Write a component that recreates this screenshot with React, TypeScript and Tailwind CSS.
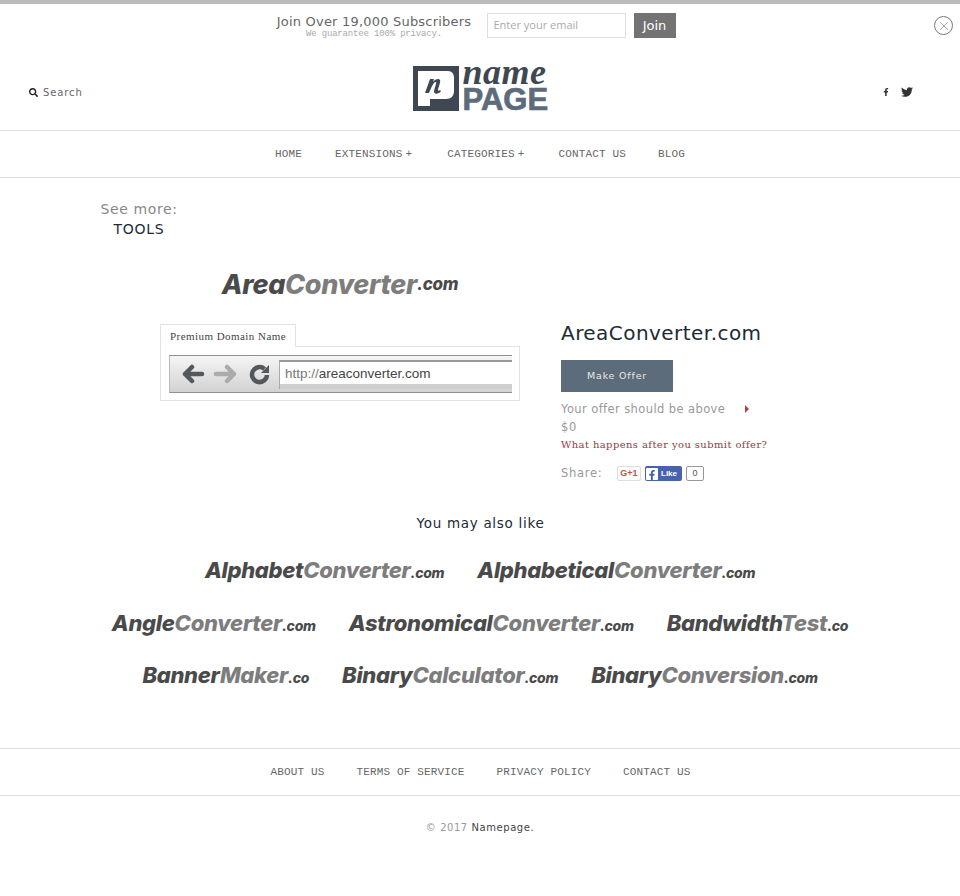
import { X } from "lucide-react";
import { FaFacebookF, FaSearch, FaTwitter } from "react-icons/fa";

const footerLinks = ["ABOUT US", "TERMS OF SERVICE", "PRIVACY POLICY", "CONTACT US"];

const logoRows = [
  [
    { a: "Alphabet", b: "Converter", c: ".com" },
    { a: "Alphabetical", b: "Converter", c: ".com" },
  ],
  [
    { a: "Angle", b: "Converter", c: ".com" },
    { a: "Astronomical", b: "Converter", c: ".com" },
    { a: "Bandwidth", b: "Test", c: ".co" },
  ],
  [
    { a: "Banner", b: "Maker", c: ".co" },
    { a: "Binary", b: "Calculator", c: ".com" },
    { a: "Binary", b: "Conversion", c: ".com" },
  ],
];

function DomainLogo({ a, b, c }: { a: string; b: string; c: string }) {
  return (
    <div className="h-[30px] whitespace-nowrap font-['Inter',sans-serif] text-[22px] leading-[30px] font-extrabold tracking-[-0.3px] italic">
      <span className="text-[#4a4a4a]">{a}</span>
      <span className="text-[#7d7d7d]">{b}</span>
      <span className="text-[14px] tracking-[-0.3px] text-[#4a4a4a]">{c}</span>
    </div>
  );
}

function SiteLogo() {
  return (
    <div className="mb-[7px] flex items-center gap-[4px]">
      <svg width="46" height="45" viewBox="0 0 46 45">
        <rect width="46" height="45" fill="#3f4852" />
        <path d="M5 5h30c4 0 6 3 6 7v13c0 5-3 8-8 8H17v7H5z" fill="#fff" />
        <path d="M12 27l5-14h4l-1 3c2-3 6-4 7-2 1 2-2 8-2 10 0 1 1 1 2 0l1 1c-2 3-6 4-7 1 0-3 3-9 2-10-2-1-5 6-7 11z" fill="#3f4852" />
      </svg>
      <div className="flex w-[86px] flex-col">
        <span className="-mt-[4px] font-['Liberation_Serif',serif] text-[36px] leading-[21px] font-bold tracking-[0.5px] text-[#3f4852] italic">
          name
        </span>
        <span className="mt-[5px] font-['Liberation_Sans',sans-serif] text-[31px] leading-[23px] font-bold text-[#5c6c7b] [-webkit-text-stroke:0.7px_#5c6c7b]">
          PAGE
        </span>
      </div>
    </div>
  );
}

function BrowserBar() {
  return (
    <div className="flex h-[38px] w-[343px] items-center border-y border-y-[#8f8f8f] border-l border-l-[#bbb] bg-gradient-to-b from-[#f5f5f5] to-[#d2d2d2] pl-[12px]">
      <svg width="90" height="22" viewBox="0 0 90 22" className="shrink-0">
        <path d="M3 11h17M10 4l-7 7 7 7" fill="none" stroke="#53585c" strokeWidth="4.5" strokeLinecap="round" strokeLinejoin="round" />
        <path d="M34 11h18M45 4l7 7-7 7" fill="none" stroke="#ababab" strokeWidth="4.5" strokeLinecap="round" strokeLinejoin="round" />
        <path d="M85 12a7.5 7.5 0 1 1-2.5-6" fill="none" stroke="#53585c" strokeWidth="4.5" />
        <path d="M87 2v8h-8z" fill="#53585c" />
      </svg>
      <div className="ml-[7px] flex h-[29px] flex-1 items-center border-t-2 border-l border-t-[#999] border-l-[#aaa] bg-white pb-[2px] pl-[5px] shadow-[inset_0_-5px_0_#cfcfcf] font-['Liberation_Sans',sans-serif] text-[13.5px]">
        <span className="text-[#777]">http://</span>
        <span className="text-[#444]">areaconverter.com</span>
      </div>
    </div>
  );
}

export default function App() {
  return (
    <div className="relative min-h-[896px] bg-white font-['DejaVu_Sans',sans-serif] text-[#777]">
      <div className="h-1 bg-[#bbbbbb]" />

      {/* subscribe bar */}
      <div className="flex h-[44px] items-start justify-center pt-[9px] pr-[9px]">
        <div className="mr-[16px] flex w-[195px] flex-col items-center pt-[1px] pl-[2px]">
          <span className="text-[13px] leading-[16px] tracking-[0.2px] whitespace-nowrap text-[#666]">Join Over 19,000 Subscribers</span>
          <span className="font-['Liberation_Mono',monospace] text-[9px] leading-[9px] tracking-[-0.17px] whitespace-nowrap text-[#aaa]">We guarantee 100% privacy.</span>
        </div>
        <input
          readOnly
          placeholder="Enter your email"
          className="h-[25px] w-[139px] border border-[#ddd] px-[6px] pb-[3px] font-['Open_Sans',sans-serif] text-[11px] placeholder:text-[#aaa]"
        />
        <button className="ml-[8px] h-[25px] w-[42px] bg-[#737373] text-[13px] text-white">Join</button>
      </div>
      <button className="absolute top-[16px] left-[934px] flex h-[19px] w-[19px] items-center justify-center rounded-full border border-[#777]">
        <X size={14} strokeWidth={1} className="text-[#666]" />
      </button>

      <header className="flex h-[82px] items-center justify-between pt-[6px] pr-[28px] pl-[29px]">
        <div className="flex w-[150px] items-center gap-[5px]">
          <FaSearch size={9} className="text-[#222]" />
          <span className="text-[10px] tracking-[0.9px] text-[#666]">Search</span>
        </div>
        <SiteLogo />
        <div className="flex w-[150px] items-center justify-end gap-[11px] pr-[19px] text-[#333]">
          <FaFacebookF size={8} />
          <FaTwitter size={12} />
        </div>
      </header>

      <nav className="flex h-[48px] items-center border-y border-[#dedede] pl-[275px] font-['Liberation_Mono',monospace] text-[11px] tracking-[0.15px] text-[#666]">
        <span className="whitespace-nowrap">HOME</span>
        <span className="ml-[33px] whitespace-nowrap">EXTENSIONS<span className="ml-[3px]">+</span></span>
        <span className="ml-[35px] whitespace-nowrap">CATEGORIES<span className="ml-[3px]">+</span></span>
        <span className="ml-[34px] whitespace-nowrap">CONTACT US</span>
        <span className="ml-[32px] whitespace-nowrap">BLOG</span>
      </nav>

      <div className="mt-[22px] ml-[101px] flex w-[76px] flex-col items-center">
        <span className="text-[14px] leading-[18px] tracking-[0.6px] whitespace-nowrap text-[#888]">See more:</span>
        <span className="mt-[2px] text-[14px] leading-[18px] tracking-[0.7px] text-[#1d2a35]">TOOLS</span>
      </div>

      <section className="mt-[17px] flex pl-[160px]">
        <div className="w-[360px]">
          <div className="flex h-[60px] items-center justify-center font-['Inter',sans-serif] text-[27px] font-extrabold tracking-[-0.35px] whitespace-nowrap italic">
            <span className="text-[#4a4a4a]">Area</span>
            <span className="text-[#7d7d7d]">Converter</span>
            <span className="text-[17px] tracking-[-0.3px] text-[#4a4a4a]">.com</span>
          </div>
          <div className="mt-[9px] flex">
            <div className="relative z-10 -mb-px h-[23px] rounded-t-[1px] border border-b-0 border-[#e2e2e2] bg-white px-[9px] font-['Liberation_Serif',serif] text-[11px] leading-[22px] tracking-[0.45px] text-[#444]">
              Premium Domain Name
            </div>
          </div>
          <div className="h-[55px] border border-[#e2e2e2] pt-[8px] pl-[8px]">
            <BrowserBar />
          </div>
        </div>

        <div className="ml-[41px] w-[240px] pt-[65px]">
          <h1 className="text-[20px] leading-[26px] tracking-[0.45px] text-[#1d2a35]">AreaConverter.com</h1>
          <button className="mt-[14px] h-[32px] w-[112px] bg-[#5c6c7b] text-[9.5px] tracking-[0.8px] text-[#e8e8e8]">Make Offer</button>
          <div className="mt-[9px] flex items-center text-[11.5px] leading-[16px] tracking-[0.4px] text-[#999]">
            <span className="whitespace-nowrap">Your offer should be above</span>
            <span className="ml-[20px] h-0 w-0 border-y-[4px] border-l-[4px] border-y-transparent border-l-[#b5404a]" />
          </div>
          <div className="mt-[2px] text-[11.5px] leading-[16px] tracking-[0.7px] text-[#999]">$0</div>
          <div className="mt-[2px] font-['DejaVu_Serif',serif] text-[10px] leading-[15px] tracking-[0.4px] whitespace-nowrap text-[#a8323e]">What happens after you submit offer?</div>
          <div className="mt-[13px] flex items-center">
            <span className="w-[56px] text-[11.5px] tracking-[0.7px] text-[#999]">Share:</span>
            <span className="flex h-[15px] w-[24px] items-center justify-center rounded-[2px] border border-[#ddd] font-['Liberation_Sans',sans-serif] text-[9px] font-bold text-[#c9503f]">G+1</span>
            <span className="ml-[4px] flex h-[15px] w-[37px] items-center gap-[3px] rounded-[2px] bg-[#4863ae] pl-[1px] font-['Liberation_Sans',sans-serif] text-[8px] font-bold text-white">
              <span className="flex h-[12px] w-[12px] items-end justify-center rounded-[1px] bg-white text-[#4863ae]">
                <FaFacebookF size={10} />
              </span>
              Like
            </span>
            <span className="ml-[4px] flex h-[15px] w-[18px] items-center justify-center rounded-[2px] border border-[#999] font-['Liberation_Sans',sans-serif] text-[9px] text-[#555]">0</span>
          </div>
        </div>
      </section>

      <h2 className="mt-[32px] pl-[1px] text-center text-[13.5px] leading-[18px] tracking-[0.7px] text-[#1d2a35]">You may also like</h2>

      <section className="mt-[23px] flex flex-col gap-[22.5px]">
        {logoRows.map((row, i) => (
          <div key={i} className="flex justify-center gap-[33px]">
            {row.map((logo) => (
              <DomainLogo key={logo.a + logo.b} {...logo} />
            ))}
          </div>
        ))}
      </section>

      <footer className="mt-[58px]">
        <div className="flex h-[48px] items-center justify-center gap-[32px] border-y border-[#dedede] pl-[1px] font-['Liberation_Mono',monospace] text-[11px] tracking-[0.15px] text-[#666]">
          {footerLinks.map((link) => (
            <span key={link} className="whitespace-nowrap">{link}</span>
          ))}
        </div>
        <div className="mt-[24px] text-center text-[10px] tracking-[0.55px] text-[#999]">
          © 2017 <span className="text-[#444]">Namepage.</span>
        </div>
      </footer>
    </div>
  );
}
